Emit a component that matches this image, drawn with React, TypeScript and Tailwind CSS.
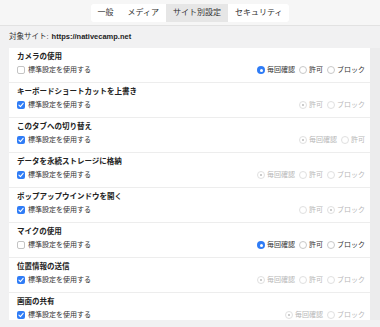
import React from 'react';

type Row = { title: string; useDefault: boolean; options: string[]; selected: number };

const rows: Row[] = [
  { title: 'カメラの使用', useDefault: false, options: ['毎回確認', '許可', 'ブロック'], selected: 0 },
  { title: 'キーボードショートカットを上書き', useDefault: true, options: ['許可', 'ブロック'], selected: 0 },
  { title: 'このタブへの切り替え', useDefault: true, options: ['毎回確認', '許可'], selected: 0 },
  { title: 'データを永続ストレージに格納', useDefault: true, options: ['毎回確認', '許可', 'ブロック'], selected: 0 },
  { title: 'ポップアップウインドウを開く', useDefault: true, options: ['許可', 'ブロック'], selected: 1 },
  { title: 'マイクの使用', useDefault: false, options: ['毎回確認', '許可', 'ブロック'], selected: 0 },
  { title: '位置情報の送信', useDefault: true, options: ['毎回確認', '許可', 'ブロック'], selected: 0 },
  { title: '画面の共有', useDefault: true, options: ['毎回確認', 'ブロック'], selected: 0 },
];

const tabs = ['一般', 'メディア', 'サイト別設定', 'セキュリティ'];

const Checkbox: React.FC<{ checked: boolean }> = ({ checked }) =>
  checked ? (
    <span className="w-[8px] h-[8px] rounded-[2px] bg-[#2f7cf6] flex items-center justify-center">
      <svg width="6" height="6" viewBox="0 0 10 10" fill="none">
        <path d="M1.5 5.2 4 7.6 8.6 2.2" stroke="white" strokeWidth="1.8" strokeLinecap="round" strokeLinejoin="round" />
      </svg>
    </span>
  ) : (
    <span className="w-[8px] h-[8px] rounded-[2px] border border-[#c4c4c4] bg-white" />
  );

const Radio: React.FC<{ checked: boolean; disabled: boolean }> = ({ checked, disabled }) => {
  if (!disabled && checked) {
    return (
      <span className="w-[8px] h-[8px] rounded-full bg-[#2f7cf6] flex items-center justify-center">
        <span className="w-[3px] h-[3px] rounded-full bg-white" />
      </span>
    );
  }
  if (!disabled) {
    return <span className="w-[8px] h-[8px] rounded-full border border-[#c8c8c8] bg-white" />;
  }
  return (
    <span className="w-[8px] h-[8px] rounded-full border border-[#e0e0e0] bg-white flex items-center justify-center">
      {checked && <span className="w-[2px] h-[2px] rounded-full bg-[#bdbdbd]" />}
    </span>
  );
};

const App: React.FC = () => {
  return (
    <div className="w-[380px] h-[327px] overflow-hidden bg-[#f1f1f2] text-[#222] font-['Liberation_Sans','Noto_Sans_CJK_JP',sans-serif]">
      <div className="h-[26px] bg-[#f6f6f6] border-b border-[#e2e2e2] flex justify-center pt-[4px]">
        <div className="flex h-[18px] bg-white rounded-[3px]">
          {tabs.map((t, i) => (
            <div
              key={t}
              className={
                i === 2
                  ? 'px-[7px] flex items-center text-[8px] bg-[#e6e6e6] text-[#333]'
                  : 'px-[7px] flex items-center text-[8px] text-[#333]'
              }
            >
              {t}
            </div>
          ))}
        </div>
      </div>

      <div className="h-[22px] flex items-center px-[9px] text-[7.5px] text-[#333]">
        <span>対象サイト:</span>
        <span className="ml-[3px] font-bold text-[#222]">https://nativecamp.net</span>
      </div>

      <div className="flex">
        <div className="ml-[9px] w-[361px] h-[272px] overflow-hidden bg-white">
          {rows.map(r => {
            const disabled = r.useDefault;
            return (
              <div key={r.title} className="h-[35px] border-b border-[#ededed] pl-[8px] pr-[5px] pt-[4px]">
                <div className="h-[9px] leading-[9px] text-[7.5px] font-bold text-[#222]">{r.title}</div>
                <div className="mt-[4px] h-[10px] flex items-center justify-between">
                  <div className="flex items-center gap-[3px]">
                    <Checkbox checked={r.useDefault} />
                    <span className="text-[7px] text-[#333]">標準設定を使用する</span>
                  </div>
                  <div className="flex items-center">
                    {r.options.map((o, i) => (
                      <div key={o} className={i > 0 ? 'flex items-center gap-[2px] ml-[4px]' : 'flex items-center gap-[2px]'}>
                        <Radio checked={i === r.selected} disabled={disabled} />
                        <span className={disabled ? 'text-[7px] text-[#b8b8b8]' : 'text-[7px] text-[#333]'}>{o}</span>
                      </div>
                    ))}
                  </div>
                </div>
              </div>
            );
          })}
        </div>
        <div className="flex-1 h-[272px] bg-[#ececed]" />
      </div>
    </div>
  );
};

export default App;
